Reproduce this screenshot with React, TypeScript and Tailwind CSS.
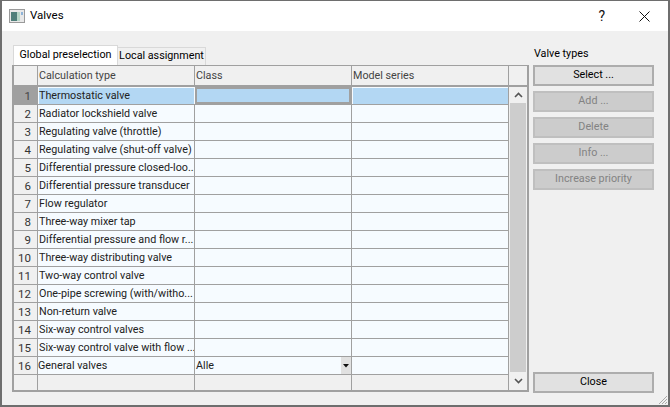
const rows = [
  "Thermostatic valve",
  "Radiator lockshield valve",
  "Regulating valve (throttle)",
  "Regulating valve (shut-off valve)",
  "Differential pressure closed-loo...",
  "Differential pressure transducer",
  "Flow regulator",
  "Three-way mixer tap",
  "Differential pressure and flow r...",
  "Three-way distributing valve",
  "Two-way control valve",
  "One-pipe screwing (with/witho...",
  "Non-return valve",
  "Six-way control valves",
  "Six-way control valve with flow ...",
  "General valves",
];

const sideButtons = ["Add ...", "Delete", "Info ...", "Increase priority"];

const Row = ({ n, name }: { n: number; name: string }) => {
  const selected = n === 1;
  const last = n === 16;
  return (
    <div className="flex h-[18px] border-b border-[#a0a0a0]">
      <div
        className={`w-[24px] shrink-0 border-r border-[#a0a0a0] pr-[6px] text-right text-[11.5px] leading-[18px] ${
          selected ? "bg-[#a0a0a0] text-[#444]" : "bg-[#f0f0f0] text-[#333]"
        }`}
      >
        {n}
      </div>
      <div
        className={`w-[157px] shrink-0 overflow-hidden whitespace-nowrap border-r leading-[18px] ${
          last ? "pl-0" : "pl-px"
        } ${
          selected
            ? "border-[#f6fbff] bg-[#b3d7f3] shadow-[inset_0_1px_0_#f6fbff,inset_1px_0_0_#f6fbff]"
            : "border-[#a0a0a0] bg-[#f6fbff]"
        }`}
      >
        {name}
      </div>
      <div
        className={`relative w-[157px] shrink-0 border-r border-[#a0a0a0] pl-px leading-[18px] ${
          selected ? "bg-[#b3d7f3] shadow-[inset_0_0_0_2px_#a0a0a0]" : "bg-[#f6fbff]"
        }`}
      >
        {last && "Alle"}
        {last && (
          <div className="absolute inset-y-0 right-0 flex w-[10px] items-center justify-center bg-[#e1e1e1]">
            <svg width="6" height="4" viewBox="0 0 6 4">
              <path d="M0 0h6L3 3.5z" fill="#111" />
            </svg>
          </div>
        )}
      </div>
      <div
        className={`w-[157px] shrink-0 border-r border-[#a0a0a0] ${
          selected ? "bg-[#b3d7f3] shadow-[inset_0_1px_0_#f6fbff,inset_1px_0_0_#f6fbff]" : "bg-[#f6fbff]"
        }`}
      />
    </div>
  );
};

export default function App() {
  return (
    <div
      className="relative flex h-[407px] w-[670px] flex-col overflow-hidden border-2 border-t-[1px] border-[#6e6e6e] bg-[#f0f0f0] text-[10.75px] text-[#222]"
      style={{ fontFamily: 'Roboto, "Noto Sans", sans-serif' }}
    >
      {/* title bar */}
      <div className="flex h-[30px] shrink-0 items-center bg-white pl-[7px] pr-[8px]">
        <svg width="16" height="14" viewBox="0 0 16 14" className="mr-[5px]">
          <rect x="0.5" y="0.5" width="15" height="13" fill="#e8e8e8" stroke="#9a9a9a" />
          <rect x="2" y="3" width="6" height="9" fill="#4f7f7a" />
          <rect x="8" y="3" width="3" height="9" fill="#b7d6c8" />
          <rect x="12" y="3" width="2" height="3" fill="#8fb4d8" />
        </svg>
        <span className="text-[11.5px] text-black">Valves</span>
        <span className="ml-auto mr-[34px] text-[14px] leading-none text-[#111]">?</span>
        <svg width="11" height="11" viewBox="0 0 11 11" className="mr-[10px]">
          <path d="M0.5 0.5l10 10M10.5 0.5l-10 10" stroke="#111" strokeWidth="1" />
        </svg>
      </div>

      <div className="flex flex-1 pl-[10px] pr-[14px]">
        {/* left side with tabs and table */}
        <div className="w-[517px] shrink-0 pt-[13px]">
          <div className="flex h-[21px] items-end pl-px">
            <div className="flex h-[20px] w-[105px] items-center justify-center whitespace-nowrap border border-b-0 border-[#d9d9d9] bg-white pb-px text-black">
              Global preselection
            </div>
            <div className="flex h-[18px] w-[88px] items-center justify-center whitespace-nowrap border border-b-0 border-l-0 border-[#d9d9d9] bg-[#f0f0f0] text-black">
              Local assignment
            </div>
          </div>
          <div className="flex h-[327px] border-2 border-t-[1px] border-l-[2px] border-[#a0a0a0]">
            <div className="w-[495px] shrink-0">
              <div className="flex h-[21px] border-b-2 border-[#a0a0a0] bg-[#f0f0f0] text-[#444]">
                <div className="w-[24px] shrink-0 border-r border-[#a0a0a0]" />
                <div className="w-[157px] shrink-0 border-r border-[#a0a0a0] pl-px leading-[20px]">Calculation type</div>
                <div className="w-[157px] shrink-0 border-r border-[#a0a0a0] pl-px leading-[20px]">Class</div>
                <div className="w-[157px] shrink-0 border-r border-[#a0a0a0] pl-px leading-[20px]">Model series</div>
              </div>
              {rows.map((name, i) => (
                <Row key={i} n={i + 1} name={name} />
              ))}
              <div className="flex h-[16px]">
                <div className="w-[24px] shrink-0 border-r border-[#a0a0a0]" />
                <div className="w-[157px] shrink-0 border-r border-[#a0a0a0]" />
                <div className="w-[157px] shrink-0 border-r border-[#a0a0a0]" />
                <div className="w-[157px] shrink-0 border-r border-[#a0a0a0]" />
              </div>
            </div>
            {/* scrollbar */}
            <div className="flex flex-1 flex-col">
              <div className="h-[21px] shrink-0 border-b-2 border-[#a0a0a0]" />
              <div className="flex h-[16px] shrink-0 items-center justify-center">
                <svg width="9" height="6" viewBox="0 0 9 6">
                  <path d="M1 5l3.5-3.5L8 5" fill="none" stroke="#555" strokeWidth="1.6" />
                </svg>
              </div>
              <div className="mx-px h-[269px] shrink-0 bg-[#cdcdcd]" />
              <div className="flex flex-1 items-center justify-center">
                <svg width="9" height="6" viewBox="0 0 9 6">
                  <path d="M1 1l3.5 3.5L8 1" fill="none" stroke="#555" strokeWidth="1.6" />
                </svg>
              </div>
            </div>
          </div>
        </div>

        {/* right side buttons */}
        <div className="ml-[4px] flex flex-1 flex-col pb-[12px] pt-[13px]">
          <div className="h-[21px] pl-px leading-[19px] text-black">Valve types</div>
          <button className="h-[21px] shrink-0 border-2 border-[#adadad] bg-[#e1e1e1] leading-none text-black">
            Select ...
          </button>
          {sideButtons.map((label) => (
            <button
              key={label}
              disabled
              className="mt-[5px] h-[21px] shrink-0 border-2 border-[#bfbfbf] bg-[#cccccc] leading-none text-[#838383]"
            >
              {label}
            </button>
          ))}
          <button className="mt-auto h-[21px] shrink-0 border-2 border-[#adadad] bg-[#e1e1e1] leading-none text-black">
            Close
          </button>
        </div>
      </div>

      {/* resize grip */}
      <svg width="11" height="11" viewBox="0 0 11 11" className="absolute bottom-0 right-0">
        <path d="M10 2L2 10M10 5L5 10M10 8L8 10" stroke="#a8a8a8" strokeWidth="1" />
      </svg>
    </div>
  );
}
